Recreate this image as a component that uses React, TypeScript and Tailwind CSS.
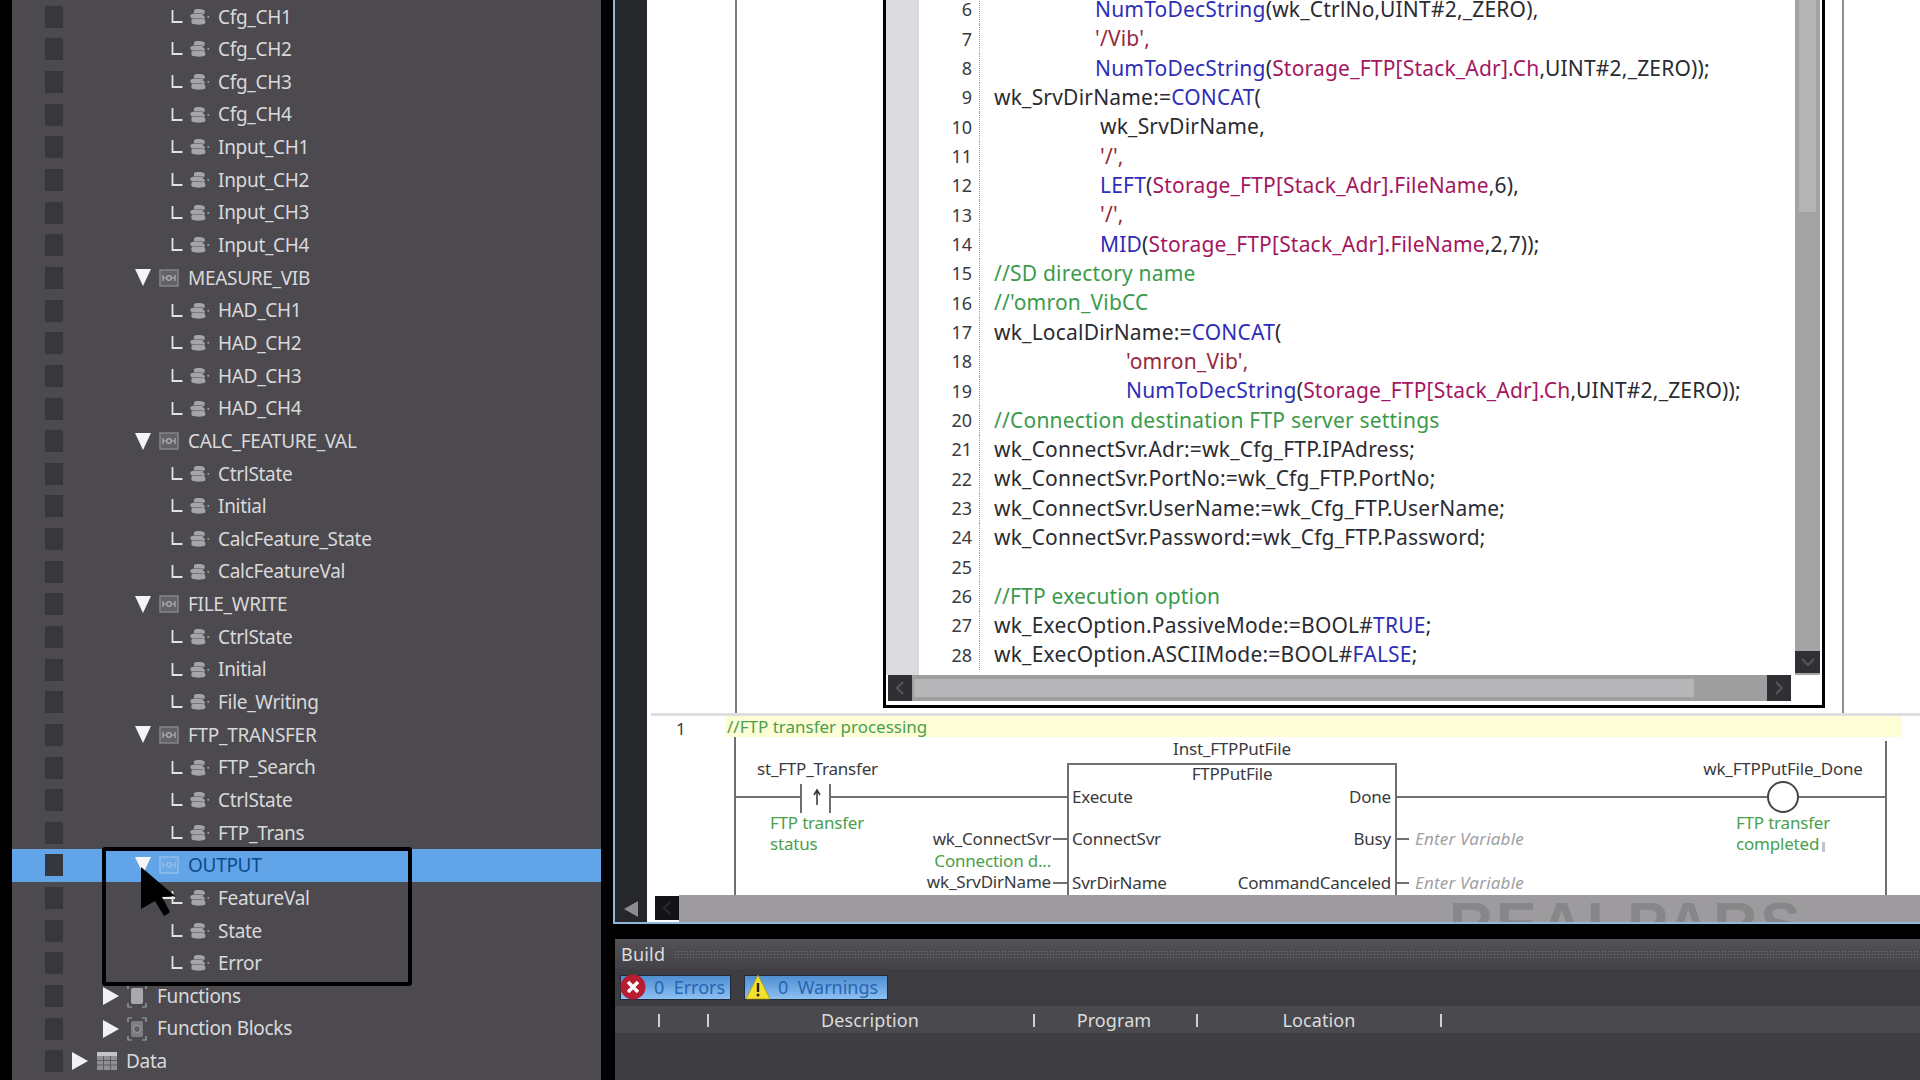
import React from 'react';

type RowKind = 'leaf' | 'group' | 'folder' | 'root';
type Row = { kind: RowKind; label: string; selected?: boolean; icon?: 'fn' | 'fb' | 'data' };

const leaves = (names: string[]): Row[] => names.map(label => ({ kind: 'leaf', label }));

const rows: Row[] = [
  ...leaves(['Cfg_CH1', 'Cfg_CH2', 'Cfg_CH3', 'Cfg_CH4', 'Input_CH1', 'Input_CH2', 'Input_CH3', 'Input_CH4']),
  { kind: 'group', label: 'MEASURE_VIB' },
  ...leaves(['HAD_CH1', 'HAD_CH2', 'HAD_CH3', 'HAD_CH4']),
  { kind: 'group', label: 'CALC_FEATURE_VAL' },
  ...leaves(['CtrlState', 'Initial', 'CalcFeature_State', 'CalcFeatureVal']),
  { kind: 'group', label: 'FILE_WRITE' },
  ...leaves(['CtrlState', 'Initial', 'File_Writing']),
  { kind: 'group', label: 'FTP_TRANSFER' },
  ...leaves(['FTP_Search', 'CtrlState', 'FTP_Trans']),
  { kind: 'group', label: 'OUTPUT', selected: true },
  ...leaves(['FeatureVal', 'State', 'Error']),
  { kind: 'folder', label: 'Functions', icon: 'fn' },
  { kind: 'folder', label: 'Function Blocks', icon: 'fb' },
  { kind: 'root', label: 'Data', icon: 'data' },
];

const LeafIcon = () => (
  <svg width="40" height="22" viewBox="0 0 40 22" className="shrink-0" fill="none">
    <path d="M1.5 4v12h10" stroke="#e2e2e4" strokeWidth="1.8" />
    <path d="M23 4c1-1.500 8-1.500 10 0 1 1 1 3 0 4l-2 1 2 1c1 1 1 2 0 3 1 1 2 3 1 4.500-1 1.500-11 1.500-13 0-1-1-1-3 0-4l1-1-2-1c-1-1-1-2 0-3l3-1z" fill="#a5a5a8" />
    <path d="M20 12.500h12M22 7.500h10" stroke="#77767a" strokeWidth="1.2" />
    <rect x="36.500" y="10" width="1.600" height="1.600" fill="#a9a9ac" />
  </svg>
);

const GroupIcon = ({ selected }: { selected?: boolean }) => (
  <svg width="20" height="20" viewBox="0 0 20 20" className="shrink-0" fill="none">
    <rect x="1" y="2" width="18" height="16" stroke={selected ? '#8fbdec' : '#858589'} strokeWidth="1.5" fill={selected ? '#6aa8e8' : '#636267'} />
    <path d="M4 7v6M4 10h4M12 10h4M16 7v6" stroke={selected ? '#93c0ee' : '#b2b2b5'} strokeWidth="1.2" />
    <circle cx="10" cy="10" r="2.300" stroke={selected ? '#93c0ee' : '#b2b2b5'} strokeWidth="1.2" />
  </svg>
);

const FolderIcon = ({ icon }: { icon?: Row['icon'] }) => {
  if (icon === 'data') {
    return (
      <svg width="20" height="20" viewBox="0 0 20 20" className="shrink-0">
        <rect x="0" y="1" width="20" height="18" fill="#909094" />
        <rect x="0" y="1" width="20" height="4" fill="#c4c4c6" />
        <path d="M6.500 5v14M13.500 5v14M0 9.500h20M0 14h20" stroke="#5c5b60" strokeWidth="1" />
      </svg>
    );
  }
  return (
    <svg width="20" height="24" viewBox="0 0 20 24" className="shrink-0" fill="none">
      <path d="M1 5V1h4M15 1h4v4M19 19v4h-4M5 23H1v-4" stroke="#a6a6a9" strokeWidth="1.2" />
      <rect x="4" y="4" width="12" height="16" rx="2" fill={icon === 'fb' ? '#7f7e83' : '#a9a9ac'} />
      {icon === 'fb' && <circle cx="10" cy="12" r="3.500" fill="#5f5e63" stroke="#a3a3a6" />}
    </svg>
  );
};

const TriRight = () => (
  <svg width="16" height="18" viewBox="0 0 16 18" className="shrink-0">
    <path d="M0 0l16 9-16 9z" fill="#f2f2f2" />
  </svg>
);

const TriDown = () => (
  <svg width="16" height="17" viewBox="0 0 16 17" className="shrink-0">
    <path d="M0 0h16l-8 17z" fill="#f5f5f5" />
  </svg>
);

const TreeRow = ({ row }: { row: Row }) => (
  <div className={`flex items-center h-[32.65px] pl-[33px] ${row.selected ? 'bg-[#62a4e8]' : ''}`}>
    <div className={`shrink-0 w-[18px] h-[22px] ${row.selected ? 'bg-[#34383e]' : 'bg-[#38373b]'}`} />
    {row.kind === 'leaf' && (
      <div className="flex items-center ml-[108px] gap-[7px]">
        <LeafIcon />
        <span>{row.label}</span>
      </div>
    )}
    {row.kind === 'group' && (
      <div className="flex items-center ml-[72px]">
        <TriDown />
        <div className="ml-[8px]"><GroupIcon selected={row.selected} /></div>
        <span className={`ml-[9px] ${row.selected ? 'text-[#0d4a8c]' : ''}`}>{row.label}</span>
      </div>
    )}
    {row.kind === 'folder' && (
      <div className="flex items-center ml-[40px]">
        <TriRight />
        <div className="ml-[8px]"><FolderIcon icon={row.icon} /></div>
        <span className="ml-[10px]">{row.label}</span>
      </div>
    )}
    {row.kind === 'root' && (
      <div className="flex items-center ml-[9px]">
        <TriRight />
        <div className="ml-[9px]"><FolderIcon icon={row.icon} /></div>
        <span className="ml-[9px]">{row.label}</span>
      </div>
    )}
  </div>
);

const B = ({ children }: { children: React.ReactNode }) => <span className="text-[#2e2eb8]">{children}</span>;
const V = ({ children }: { children: React.ReactNode }) => <span className="text-[#a5165f]">{children}</span>;
const S = ({ children }: { children: React.ReactNode }) => <span className="text-[#98283c]">{children}</span>;
const G = ({ children }: { children: React.ReactNode }) => <span className="text-[#3c9a4c]">{children}</span>;

const codeLines: { n: number; indent?: string; body: React.ReactNode }[] = [
  { n: 6, indent: 'pl-[101px]', body: <><B>NumToDecString</B>(wk_CtrlNo,UINT#2,_ZERO),</> },
  { n: 7, indent: 'pl-[101px]', body: <S>'/Vib',</S> },
  { n: 8, indent: 'pl-[101px]', body: <><B>NumToDecString</B>(<V>Storage_FTP[Stack_Adr].Ch</V>,UINT#2,_ZERO));</> },
  { n: 9, body: <>wk_SrvDirName:=<B>CONCAT</B>(</> },
  { n: 10, indent: 'pl-[106px]', body: 'wk_SrvDirName,' },
  { n: 11, indent: 'pl-[106px]', body: <S>'/',</S> },
  { n: 12, indent: 'pl-[106px]', body: <><B>LEFT</B>(<V>Storage_FTP[Stack_Adr].FileName</V>,6),</> },
  { n: 13, indent: 'pl-[106px]', body: <S>'/',</S> },
  { n: 14, indent: 'pl-[106px]', body: <><B>MID</B>(<V>Storage_FTP[Stack_Adr].FileName</V>,2,7));</> },
  { n: 15, body: <G>//SD directory name</G> },
  { n: 16, body: <G>//'omron_VibCC</G> },
  { n: 17, body: <>wk_LocalDirName:=<B>CONCAT</B>(</> },
  { n: 18, indent: 'pl-[132px]', body: <S>'omron_Vib',</S> },
  { n: 19, indent: 'pl-[132px]', body: <><B>NumToDecString</B>(<V>Storage_FTP[Stack_Adr].Ch</V>,UINT#2,_ZERO));</> },
  { n: 20, body: <G>//Connection destination FTP server settings</G> },
  { n: 21, body: 'wk_ConnectSvr.Adr:=wk_Cfg_FTP.IPAdress;' },
  { n: 22, body: 'wk_ConnectSvr.PortNo:=wk_Cfg_FTP.PortNo;' },
  { n: 23, body: 'wk_ConnectSvr.UserName:=wk_Cfg_FTP.UserName;' },
  { n: 24, body: 'wk_ConnectSvr.Password:=wk_Cfg_FTP.Password;' },
  { n: 25, body: '' },
  { n: 26, body: <G>//FTP execution option</G> },
  { n: 27, body: <>wk_ExecOption.PassiveMode:=BOOL#<B>TRUE</B>;</> },
  { n: 28, body: <>wk_ExecOption.ASCIIMode:=BOOL#<B>FALSE</B>;</> },
];

const Chevron = ({ d }: { d: string }) => (
  <svg width="10" height="14" viewBox="0 0 10 14" fill="none"><path d={d} stroke="#55565b" strokeWidth="2" /></svg>
);

const CodeBox = () => (
  <div className="w-[942px] h-[708px] border-[3px] border-t-0 border-black bg-white flex flex-col">
    <div className="flex-1 flex min-h-0">
      <div className="w-[33px] bg-[#dcdce0] shrink-0" />
      <div className="flex-1 overflow-hidden text-[21px] text-[#2b2b32] tracking-[0.2px]">
        <div className="-mt-[5px]">
          {codeLines.map(line => (
            <div key={line.n} className="flex h-[29.35px] items-center whitespace-nowrap">
              <span className="w-[53px] text-right text-[#3a3a40] text-[18px] tracking-normal">{line.n}</span>
              <span className="h-full w-[8px] border-r border-dotted border-[#9c9ca0]" />
              <span className={`ml-[14px] ${line.indent ?? ''}`}>{line.body}</span>
            </div>
          ))}
        </div>
      </div>
      <div className="w-[25px] shrink-0 mr-[2px] flex flex-col bg-[#a4a4a6]">
        <div className="h-[212px] mx-[4px] bg-[#b4b4b6]" />
        <div className="flex-1" />
        <div className="h-[22px] bg-[#2f3034] mb-[2px] flex items-center justify-center">
          <svg width="14" height="10" viewBox="0 0 14 10" fill="none"><path d="M1 2l6 6 6-6" stroke="#55565b" strokeWidth="2" /></svg>
        </div>
      </div>
    </div>
    <div className="h-[30px] shrink-0 flex pl-[2px]">
      <div className="w-[24px] h-[26px] bg-[#2f3034] flex items-center justify-center"><Chevron d="M8 1L2 7l6 6" /></div>
      <div className="w-[855px] h-[26px] bg-[#9e9e9f] flex">
        <div className="w-[780px] my-[4px] ml-[2px] bg-[#b6b6b8]" />
      </div>
      <div className="w-[24px] h-[26px] bg-[#2f3034] flex items-center justify-center"><Chevron d="M2 1l6 6-6 6" /></div>
    </div>
  </div>
);

const Ladder = () => (
  <div className="relative h-[182px] text-[17px] leading-[24px] text-[#3a3a3e] tracking-[-0.2px] overflow-hidden">
    <div className="absolute left-[4px] right-0 top-0 h-[3px] bg-[#dedede]" />
    <div className="absolute left-[78px] top-[3px] w-[1177px] h-[21px] bg-[#fdfdd6]" />
    <svg className="absolute left-0 top-0" width="1273" height="182" fill="none" stroke="#6f6f72" strokeWidth="2">
      <path d="M88 24v158M1239 28v154" />
      <path d="M88 84h66M183 84h238M749 84h372M1151 84h88" />
      <path d="M154 71v29M183 71v29" />
      <path d="M170 92v-14M167 82l3-5 3 5" strokeWidth="1.5" stroke="#333" />
      <path d="M421 182V51h328v131" />
      <path d="M406 126h15M406 170h15M749 126h13M749 170h13" />
      <circle cx="1136" cy="84" r="15" fill="#fff" stroke="#444" />
      <rect x="1175" y="129" width="3" height="10" fill="#c4c4c6" stroke="none" />
    </svg>
    <span className="absolute left-[29px] top-[4px]">1</span>
    <span className="absolute left-[80px] top-[3px] leading-[21px] text-[17px] tracking-normal text-[#4aa04e]">//FTP transfer processing</span>
    <span className="absolute left-[110px] top-[44px]">st_FTP_Transfer</span>
    <span className="absolute left-[123px] top-[98px] text-[#4aa04e]">FTP transfer</span>
    <span className="absolute left-[123px] top-[119px] text-[#4aa04e]">status</span>
    <span className="absolute left-[204px] w-[200px] text-right top-[114px]">wk_ConnectSvr</span>
    <span className="absolute left-[204px] w-[200px] text-right top-[136px] text-[#4aa04e]">Connection d...</span>
    <span className="absolute left-[204px] w-[200px] text-right top-[157px]">wk_SrvDirName</span>
    <span className="absolute left-[485px] w-[200px] text-center top-[24px]">Inst_FTPPutFile</span>
    <span className="absolute left-[485px] w-[200px] text-center top-[49px]">FTPPutFile</span>
    <span className="absolute left-[425px] top-[72px]">Execute</span>
    <span className="absolute left-[425px] top-[114px]">ConnectSvr</span>
    <span className="absolute left-[425px] top-[158px]">SvrDirName</span>
    <span className="absolute left-[544px] w-[200px] text-right top-[72px]">Done</span>
    <span className="absolute left-[544px] w-[200px] text-right top-[114px]">Busy</span>
    <span className="absolute left-[544px] w-[200px] text-right top-[158px]">CommandCanceled</span>
    <span className="absolute left-[768px] top-[114px] italic tracking-[0.2px] text-[#a0a0a4]">Enter Variable</span>
    <span className="absolute left-[768px] top-[158px] italic tracking-[0.2px] text-[#a0a0a4]">Enter Variable</span>
    <span className="absolute left-[1036px] w-[200px] text-center top-[44px]">wk_FTPPutFile_Done</span>
    <span className="absolute left-[1089px] top-[98px] text-[#4aa04e]">FTP transfer</span>
    <span className="absolute left-[1089px] top-[119px] text-[#4aa04e]">completed</span>
  </div>
);

const BottomScroll = () => (
  <div className="relative flex h-[27px] border-b-2 border-[#8fb8dc] box-content overflow-hidden bg-white">
    <div className="w-[32px] bg-[#26272a] flex items-center justify-center">
      <svg width="14" height="16" viewBox="0 0 14 16"><path d="M14 0L0 8l14 8z" fill="#8d8d90" /></svg>
    </div>
    <div className="w-[8px]" />
    <div className="w-[24px] h-[24px] mt-[1px] bg-[#141416] flex items-center justify-center">
      <svg width="10" height="14" viewBox="0 0 10 14" fill="none"><path d="M8 1L2 7l6 6" stroke="#2a2b2e" strokeWidth="2" /></svg>
    </div>
    <div className="flex-1 bg-[#9d9b9d]" />
    <span className="absolute left-[834px] -top-[1px] font-['Liberation_Sans',sans-serif] font-bold text-[61px] leading-[60px] tracking-[3px] text-[#87878a]">REALPARS</span>
  </div>
);

const ErrorIcon = () => (
  <svg width="26" height="26" viewBox="0 0 26 26" className="absolute -left-[1px] -top-[2px]">
    <circle cx="13" cy="13" r="12.500" fill="#b81c30" />
    <path d="M8 8l10 10M18 8L8 18" stroke="#fff" strokeWidth="3.400" />
  </svg>
);

const WarnIcon = () => (
  <svg width="26" height="26" viewBox="0 0 26 26" className="absolute left-0 -top-[2px]">
    <path d="M13 1l12 24H1z" fill="#f3e12a" stroke="#a6931a" strokeWidth="0.8" />
    <path d="M13 9v9" stroke="#222" strokeWidth="2.400" />
    <circle cx="13" cy="21" r="1.500" fill="#222" />
  </svg>
);

const Sep = ({ className }: { className: string }) => <span className={`absolute top-[8px] w-[2px] h-[13px] bg-[#d0d0d2] ${className}`} />;

const BuildPanel = () => (
  <div className="flex-1 ml-[2px] bg-[#3e3d41] flex flex-col text-[#dcdcde] min-h-0">
    <div className="h-[30px] flex items-center pl-[6px] bg-gradient-to-b from-[#535256] to-[#434246] text-[18px] tracking-[0.2px]">
      <span>Build</span>
      <div className="flex-1 ml-[9px] h-[9px] bg-[radial-gradient(#77777a_1px,transparent_1px)] bg-[length:3px_3px]" />
    </div>
    <div className="h-[36px] flex items-center gap-[13px] pl-[5px] text-[18px] text-[#2766b0]">
      <div className="relative w-[111px] h-[25px] bg-gradient-to-b from-[#4f8ed2] to-[#8cc0f2] border border-[#1f2a3a] pl-[33px] leading-[22px] whitespace-pre">
        <ErrorIcon />0  Errors
      </div>
      <div className="relative w-[144px] h-[25px] bg-gradient-to-b from-[#4f8ed2] to-[#8cc0f2] border border-[#1f2a3a] pl-[33px] leading-[22px] whitespace-pre">
        <WarnIcon />0  Warnings
      </div>
    </div>
    <div className="relative h-[27px] mt-[1px] bg-[#4a494d] text-[18px] tracking-[0.1px]">
      <Sep className="left-[43px]" />
      <Sep className="left-[92px]" />
      <Sep className="left-[418px]" />
      <Sep className="left-[581px]" />
      <Sep className="left-[825px]" />
      <span className="absolute left-[155px] w-[200px] text-center leading-[28px]">Description</span>
      <span className="absolute left-[399px] w-[200px] text-center leading-[28px]">Program</span>
      <span className="absolute left-[604px] w-[200px] text-center leading-[28px]">Location</span>
    </div>
  </div>
);

const App: React.FC = () => {
  return (
    <div className="w-[1920px] h-[1080px] overflow-hidden flex bg-black font-['Noto_Sans',sans-serif]">
      <div className="relative w-[589px] ml-[12px] shrink-0 h-full bg-[#4c4a4f] text-[#d9d9db] text-[19px] tracking-[-0.3px] pt-[0.5px]">
        {rows.map((row, i) => <TreeRow key={i} row={row} />)}
        <div className="absolute left-[90px] top-[847px] w-[310px] h-[139px] border-[4px] border-black rounded-[3px]" />
        <svg className="absolute left-[125px] top-[864px]" width="50" height="56" viewBox="0 0 50 56">
          <path d="M24 34h14" stroke="#e8e8e8" strokeWidth="2" />
          <path d="M4 3l34 29-13 1 8 15-4 3-2 1-9-15-14 8z" fill="#000" />
        </svg>
      </div>
      <div className="w-[12px] shrink-0" />
      <div className="w-[1307px] shrink-0 flex flex-col">
        <div className="flex flex-col border-l-2 border-[#8fb8dc]">
          <div className="flex">
            <div className="w-[32px] shrink-0 bg-[#26272a]" />
            <div className="flex-1 bg-white min-w-0">
              <div className="h-[713px] flex ml-[88px] border-l-2 border-[#7c7c7f]">
                <div className="ml-[146px]"><CodeBox /></div>
                <div className="ml-[17px] h-full border-l-2 border-[#8e8e90]" />
              </div>
              <Ladder />
            </div>
          </div>
          <BottomScroll />
        </div>
        <div className="h-[15px] shrink-0" />
        <BuildPanel />
      </div>
    </div>
  );
};

export default App;
